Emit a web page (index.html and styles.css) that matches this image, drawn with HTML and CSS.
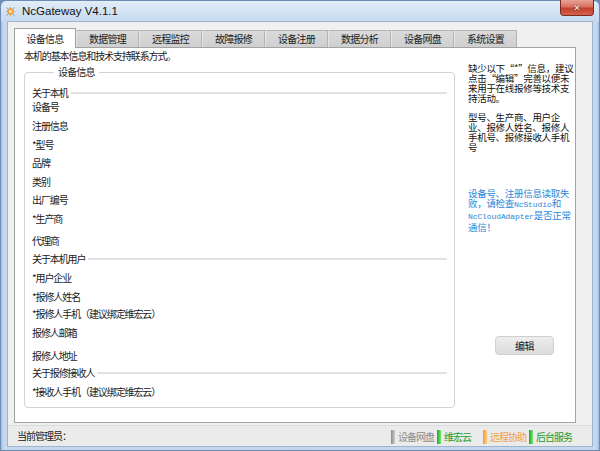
FILE: index.html
```html
<!DOCTYPE html>
<html lang="zh-CN">
<head>
<meta charset="utf-8">
<title>NcGateway V4.1.1</title>
<link rel="stylesheet" href="styles.css">
</head>
<body>
<div class="window">
  <div class="titlebar">
    <svg class="app-icon" width="11" height="11" viewBox="0 0 11 11">
      <circle cx="5.5" cy="5.5" r="3.2" fill="#f0a63a"/>
      <path d="M5.5 0.5 L6.3 3 L5.5 2.6 L4.7 3 Z M10.5 5.5 L8 6.3 L8.4 5.5 L8 4.7 Z M5.5 10.5 L4.7 8 L5.5 8.4 L6.3 8 Z M0.5 5.5 L3 4.7 L2.6 5.5 L3 6.3 Z" fill="#e08a20"/>
      <circle cx="5.5" cy="5.5" r="1.3" fill="#fff3c8"/>
      <path d="M1.5 1.5 L3.5 3.2 M9.5 1.5 L7.5 3.2 M1.5 9.5 L3.5 7.8 M9.5 9.5 L7.5 7.8" stroke="#6aa0d8" stroke-width="1"/>
    </svg>
    <span class="title">NcGateway V4.1.1</span>
    <div class="close"><span>✕</span></div>
  </div>
  <div class="frame">
    <div class="client">
      <div class="tabs">
        <div class="tab active">设备信息</div>
        <div class="tab">数据管理</div>
        <div class="tab">远程监控</div>
        <div class="tab">故障报修</div>
        <div class="tab">设备注册</div>
        <div class="tab">数据分析</div>
        <div class="tab">设备网盘</div>
        <div class="tab">系统设置</div>
      </div>
      <div class="panel">
        <div class="main">
          <div class="intro">本机的基本信息和技术支持联系方式。</div>
          <fieldset class="group">
            <legend>设备信息</legend>
            <div class="rows">
              <div class="section"><span>关于本机</span><i class="rule"></i></div>
              <div class="row">设备号</div>
              <div class="row">注册信息</div>
              <div class="row">*型号</div>
              <div class="row">品牌</div>
              <div class="row">类别</div>
              <div class="row">出厂编号</div>
              <div class="row">*生产商</div>
              <div class="row">代理商</div>
              <div class="section"><span>关于本机用户</span><i class="rule"></i></div>
              <div class="row">*用户企业</div>
              <div class="row">*报修人姓名</div>
              <div class="row">*报修人手机（建议绑定维宏云）</div>
              <div class="row">报修人邮箱</div>
              <div class="row">报修人地址</div>
              <div class="section"><span>关于报修接收人</span><i class="rule"></i></div>
              <div class="row">*接收人手机（建议绑定维宏云）</div>
            </div>
          </fieldset>
        </div>
        <div class="side">
          <p class="note">缺少以下“*”信息，建议<br>点击“编辑”完善以便未<br>来用于在线报修等技术支<br>持活动。</p>
          <p class="note note-list">型号、生产商、用户企<br>业、报修人姓名、报修人<br>手机号、报修接收人手机<br>号</p>
          <p class="note note-warn">设备号、注册信息读取失<br>败，请检查<span class="mono">NcStudio</span>和<br><span class="mono">NcCloudAdapter</span>是否正常<br>通信！</p>
          <button class="edit" type="button">编辑</button>
        </div>
      </div>
      <div class="statusbar">
        <span class="admin">当前管理员：</span>
        <div class="status-items">
          <div class="status-item st-disk"><i class="led"></i><span>设备网盘</span></div>
          <div class="status-item st-cloud"><i class="led"></i><span>维宏云</span></div>
          <div class="status-item st-remote"><i class="led"></i><span>远程协助</span></div>
          <div class="status-item st-service"><i class="led"></i><span>后台服务</span></div>
        </div>
      </div>
    </div>
  </div>
</div>
</body>
</html>
```
FILE: styles.css
```css
* { box-sizing: border-box; }
html, body { margin: 0; padding: 0; }
body {
  width: 600px;
  height: 451px;
  overflow: hidden;
  background: #6f8db4;
  font-family: "Noto Sans CJK SC", "Noto Sans", sans-serif;
  font-size: 10px;
  color: #1a1a1a;
}
.window {
  width: 600px;
  height: 451px;
  display: flex;
  flex-direction: column;
  background: linear-gradient(90deg, #a9c1de 0, #c6d8ee 3px, #c3d6ed 50%, #c6d8ee calc(100% - 3px), #a9c1de 100%);
  border: 1px solid #6e8cb3;
  border-radius: 6px 6px 0 0;
}
.titlebar {
  height: 21px;
  display: flex;
  align-items: flex-start;
  padding-left: 4px;
  background: linear-gradient(180deg, #e3edf8 0%, #d3e2f3 50%, #c7d9ef 100%);
  border-radius: 6px 6px 0 0;
}
.app-icon { margin-top: 5px; flex: none; }
.title {
  margin-left: 6px;
  margin-top: 3px;
  font-family: "Liberation Sans", "Noto Sans", sans-serif;
  font-size: 11.5px;
  line-height: 15px;
  color: #111;
}
.close {
  margin-left: auto;
  margin-right: 5px;
  width: 34px;
  height: 16px;
  margin-top: -1px;
  border: 1px solid #7a2a22;
  border-top: none;
  border-radius: 0 0 4px 4px;
  background: linear-gradient(180deg, #e8a396 0%, #d8715f 45%, #c2402b 55%, #d2634d 100%);
  display: flex;
  align-items: center;
  justify-content: center;
  color: #fff;
  font-family: "DejaVu Sans", sans-serif;
  font-size: 9px;
  font-weight: bold;
  text-shadow: 0 0 1px #5a1a10, 0 0 1px #5a1a10;
}
.frame {
  flex: 1;
  display: flex;
  padding: 0 7px 4px 7px;
}
.client {
  flex: 1;
  display: flex;
  flex-direction: column;
  background: #f0f0f0;
  box-shadow: 0 0 0 1px #9fb4cf;
}
.tabs {
  height: 25px;
  display: flex;
  align-items: flex-end;
  padding-left: 6px;
}
.tab {
  width: 63px;
  height: 17px;
  background: linear-gradient(180deg, #dadada, #cfcfcf);
  border: 1px solid #b3b3b3;
  border-bottom: none;
  border-left-color: #e6e6e6;
  text-align: center;
  line-height: 16px;
  font-size: 10px;
  letter-spacing: -0.8px;
  color: #222;
}
.tab.active {
  width: 62px;
  height: 20px;
  margin-bottom: -1px;
  position: relative;
  z-index: 1;
  background: #fff;
  border-color: #a0a0a0;
  line-height: 20px;
  padding-bottom: 2px;
}
.panel {
  height: 376px;
  margin: 0 16px 0 6px;
  background: #fff;
  border: 1px solid #a3a3a3;
  display: flex;
}
.main {
  width: 440px;
  padding: 1px 0 0 9px;
}
.intro {
  line-height: 14px;
  letter-spacing: -1.1px;
}
.group {
  margin: 2px 0 0 0;
  width: 431px;
  height: 343px;
  padding: 6px 7px 0 7px;
  border: 1px solid #d3d3d3;
  border-radius: 4px;
}
.group legend {
  margin-left: 22px;
  padding: 0 4px;
  line-height: 14px;
  letter-spacing: -0.8px;
}
.rows {
  display: grid;
  grid-template-rows: 14px 19px 19px 18px 19px 18px 19px 22px 18px 19px 19px 17px 19px 23px 17px 19px 16px;
}
.row, .section {
  line-height: 16px;
  letter-spacing: -1.1px;
  white-space: nowrap;
}
.section {
  display: flex;
  align-items: flex-start;
}
.section .rule {
  flex: 1;
  height: 2px;
  margin: 7px 0 0 3px;
  background: #e2e2e2;
}
.side {
  flex: 1;
  padding: 0 0 0 13px;
  display: flex;
  flex-direction: column;
  align-items: flex-start;
}
.note {
  margin: 0;
  font-size: 9.5px;
  line-height: 10px;
  letter-spacing: -0.3px;
  white-space: nowrap;
  color: #111;
}
.side .note:first-child { margin-top: 15px; }
.note-list { margin-top: 9px; }
.note-warn {
  margin-top: 36px;
  color: #2a86d8;
}
.mono {
  font-family: "Liberation Mono", monospace;
  font-size: 8px;
  letter-spacing: -0.1px;
}
.edit {
  margin: 104px 0 0 27px;
  width: 59px;
  height: 19px;
  padding: 0;
  border: 1px solid #cfcfcf;
  border-radius: 4px;
  background: linear-gradient(180deg, #ededed, #dcdcdc);
  font-family: "Noto Sans CJK SC", sans-serif;
  font-size: 10px;
  letter-spacing: -0.5px;
  color: #111;
}
.statusbar {
  margin-top: 2px;
  height: 21px;
  display: flex;
  align-items: center;
  padding: 0 17px 0 9px;
  background: #ebebeb;
  border-top: 1px solid #dadada;
}
.admin {
  letter-spacing: -1px;
  line-height: 14px;
}
.status-items {
  margin-left: auto;
  display: flex;
  align-items: center;
  margin-top: 2px;
}
.status-item {
  display: flex;
  align-items: center;
  width: 46px;
  height: 14px;
}
.status-item span {
  margin-left: 3px;
  letter-spacing: -1px;
  line-height: 14px;
}
.led {
  width: 4px;
  height: 14px;
}
.st-disk .led { background: linear-gradient(90deg, #8a8a8a, #cfcfcf); }
.st-disk span { color: #8c8c8c; }
.st-cloud .led { background: linear-gradient(90deg, #16b016, #7de07d); }
.st-cloud span { color: #1f9d2a; }
.st-remote .led { background: linear-gradient(90deg, #f39a1e, #ffd08a); }
.st-remote span { color: #f0a040; }
.st-service .led { background: linear-gradient(90deg, #16b016, #7de07d); }
.st-service span { color: #1a9a26; }
```
